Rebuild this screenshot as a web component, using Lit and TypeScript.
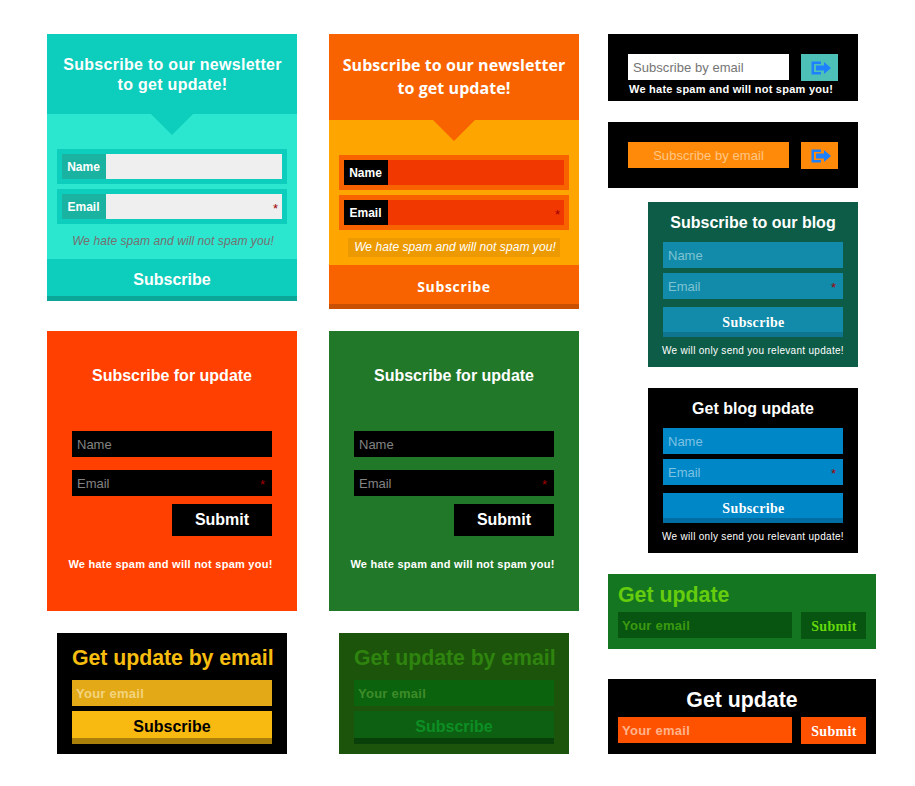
import { LitElement, html, css, svg } from "lit";
import { customElement } from "lit/decorators.js";

const exportIcon = html`<svg class="icon" viewBox="0 0 20 14" width="20" height="14">
  ${svg`<path d="M10 0.5H0.5V13.5H10V11H3V3H10Z" fill="#1e80fb"/><path d="M5 4.5H13V1L20 7L13 13V9.5H5Z" fill="#1e80fb"/>`}
</svg>`;

@customElement("app-root")
export class AppRoot extends LitElement {
  static styles = css`
    :host {
      display: block;
      box-sizing: border-box;
      height: 786px;
      padding: 34px 0 0 47px;
      background: #fff;
      font-family: "Liberation Sans", Arial, sans-serif;
      color: #fff;
    }
    * { box-sizing: border-box; }
    .page { display: flex; align-items: flex-start; }
    .col { display: flex; flex-direction: column; width: 250px; flex: none; }
    .col.mid { margin-left: 32px; }
    .col.side { margin-left: 29px; width: 268px; }
    .card { display: flex; flex-direction: column; white-space: nowrap; }
    h2, p { margin: 0; }
    h2 { font-size: 16px; font-weight: bold; line-height: 20px; text-align: center; }

    .news { height: 267px; background: #2be7cf; }
    .news .top { height: 80px; padding: 21px 0 0 1px; background: #0dcdbc; position: relative; letter-spacing: 0.29px; }
    .news .top::after {
      content: ""; position: absolute; top: 100%; left: 104px;
      border: 21px solid transparent; border-top-color: #0dcdbc; border-bottom: 0;
    }
    .news .rows { padding: 35px 10px 0; display: flex; flex-direction: column; gap: 5px; }
    .row { height: 35px; display: flex; border: 5px solid #0dcdbc; background: #efefef; }
    .row b { width: 44px; padding-right: 1px; background: #1ab3a1; font-size: 12px; line-height: 26px; text-align: center; }
    .row .star { margin: 7px 4px 0 auto; }
    .star { color: #a00000; font-size: 13px; line-height: 16px; height: 16px; }
    .italic { align-self: center; font-size: 12px; font-style: italic; line-height: 19px; height: 19px; color: #776f70; letter-spacing: 0.07px; margin: 8px 0; padding: 0 4px 0 6px; }
    .news .cta { margin-top: auto; height: 42px; background: #0dcdbc; border-bottom: 5px solid #0ca698; font-size: 16px; font-weight: bold; text-align: center; line-height: 41px; }

    .orange { height: 275px; background: #ffa500; }
    .orange .top { height: 86px; padding: 20px 0 0; background: #f86300; font-family: "Open Sans", sans-serif; letter-spacing: 0; }
    .orange .top h2 { line-height: 23px; font-size: 16px; letter-spacing: 0.06px; }
    .orange .top::after { border-top-color: #f86300; }
    .orange .row { border-color: #f86300; background: #f03800; }
    .orange .row b { background: #000; }
    .orange .italic { color: #fff; background: #ed9a00; }
    .orange .cta { height: 44px; background: #f86300; border-color: #c85000; font-family: "Open Sans", sans-serif; font-size: 14px; letter-spacing: 0.65px; line-height: 43px; }

    .plain { height: 280px; margin-top: 30px; padding: 35px 25px 0; background: #ff4000; }
    .mid .plain { margin-top: 22px; background: #207828; }
    .field { height: 26px; padding: 0 5px; font-size: 13px; line-height: 27px; display: flex; justify-content: space-between; flex: none; }
    .plain .field { background: #000; color: #838383; }
    .plain .field.first { margin: 45px 0 13px; }
    .plain .star { margin: 7px 2px 0 0; }
    .plain .send { align-self: flex-end; width: 100px; height: 32px; margin-top: 8px; background: #000; font-size: 16px; font-weight: bold; line-height: 31px; text-align: center; }
    .note { font-size: 11px; font-weight: bold; line-height: 14px; letter-spacing: 0.25px; text-align: center; }
    .plain .note { margin: 21px -19px 0 -20px; transform: none; padding-right: 2px; }

    .get { width: 230px; height: 121px; margin: 22px 0 0 10px; padding: 11px 15px 0; background: #000; }
    .get h2, .inline h2 { font-size: 21.33px; line-height: 28px; }
    .get h2 { color: #f5bd0f; margin-bottom: 8px; letter-spacing: -0.06px; }
    .get .field { background: #e3a917; color: #f3d47f; }
    .bold { font-weight: bold; letter-spacing: 0.25px; padding-left: 4px; }
    .get .cta { height: 33px; margin-top: 5px; background: #f8b910; border-bottom: 6px solid #aa7f0a; color: #000; font-size: 16px; font-weight: bold; line-height: 31px; text-align: center; }
    .mid .get { background: #1b540a; }
    .mid .get h2 { color: #2f840f; }
    .mid .get .field { background: #0c630d; color: #3e8c29; }
    .mid .get .cta { background: #0d6012; border-color: #093f09; color: #0d8e24; }

    .mini { width: 250px; height: 67px; padding: 20px 20px 0; background: #000; }
    .mini.second { height: 66px; margin-top: 21px; }
    .line { display: flex; justify-content: space-between; height: 27px; }
    .mini .field { width: 161px; background: #fff; color: #757575; letter-spacing: 0.05px; }
    .mini .go { width: 37px; height: 27px; background: #4dc0b8; display: flex; align-items: center; justify-content: center; padding-left: 3px; }
    .mini.second .field { background: #ff8a0a; color: #ffc684; justify-content: center; }
    .mini.second .go { background: #ff8a0a; }
    .mini .note { margin: 1px 0 0 1px; text-align: left; }
    .icon { display: block; }

    .blog { width: 210px; height: 165px; margin: 14px 0 0 40px; padding: 11px 15px 0; background: #0c5c47; }
    .blog.dark { margin-top: 21px; background: #000; }
    .blog .field { margin-top: 5px; background: #118ba9; color: #7fc3d3; }
    .blog .field.first { margin-top: 9px; }
    .blog .star { margin: 7px 2px 0 0; }
    .blog .cta { height: 30px; margin-top: 8px; padding-left: 1px; background: #118ba9; border-bottom: 5px solid #0e7490; text-align: center; line-height: 32px; }
    .blog.dark .field { background: #0087c7; color: #7dc2e3; }
    .blog.dark .cta { background: #0087c7; border-color: #006ea3; }
    .small { font-family: "Liberation Serif", serif; font-weight: bold; font-size: 14px; letter-spacing: 0.35px; }
    .blog .tiny { font-size: 10px; line-height: 14px; margin: 7px -10px 0; text-align: center; letter-spacing: 0.3px; }

    .inline { width: 268px; height: 75px; margin-top: 21px; padding: 7px 10px 0; background: #147620; }
    .inline h2 { text-align: left; color: #66cc0e; margin-bottom: 3px; }
    .inline .field { width: 174px; background: #075510; color: #3b9a11; }
    .inline .send { width: 65px; height: 27px; padding-left: 1px; background: #075510; color: #66d80e; line-height: 30px; text-align: center; }
    .inline.dark { margin-top: 30px; background: #000; }
    .inline.dark h2 { color: #fff; text-align: center; }
    .inline.dark .field { background: #ff5200; color: #ffb28c; }
    .inline.dark .send { background: #ff5200; color: #fff; }
  `;

  newsletter(kind = "") {
    return html`<section class="card news ${kind}">
      <div class="top"><h2>Subscribe to our newsletter<br>to get update!</h2></div>
      <div class="rows">
        <div class="row"><b>Name</b></div>
        <div class="row"><b>Email</b><span class="star">*</span></div>
      </div>
      <p class="italic">We hate spam and will not spam you!</p>
      <div class="cta">Subscribe</div>
    </section>`;
  }

  plain() {
    return html`<section class="card plain">
      <h2>Subscribe for update</h2>
      <div class="field first">Name</div>
      <div class="field">Email<span class="star">*</span></div>
      <div class="send">Submit</div>
      <p class="note">We hate spam and will not spam you!</p>
    </section>`;
  }

  byEmail() {
    return html`<section class="card get">
      <h2>Get update by email</h2>
      <div class="field bold">Your email</div>
      <div class="cta">Subscribe</div>
    </section>`;
  }

  mini(kind: string, note: boolean) {
    return html`<section class="card mini ${kind}">
      <div class="line"><div class="field">Subscribe by email</div><div class="go">${exportIcon}</div></div>
      ${note ? html`<p class="note">We hate spam and will not spam you!</p>` : ""}
    </section>`;
  }

  blog(title: string, kind = "") {
    return html`<section class="card blog ${kind}">
      <h2>${title}</h2>
      <div class="field first">Name</div>
      <div class="field">Email<span class="star">*</span></div>
      <div class="cta small">Subscribe</div>
      <p class="tiny">We will only send you relevant update!</p>
    </section>`;
  }

  inline(kind = "") {
    return html`<section class="card inline ${kind}">
      <h2>Get update</h2>
      <div class="line"><div class="field bold">Your email</div><div class="send small">Submit</div></div>
    </section>`;
  }

  render() {
    return html`<main class="page">
      <div class="col">${this.newsletter()}${this.plain()}${this.byEmail()}</div>
      <div class="col mid">${this.newsletter("orange")}${this.plain()}${this.byEmail()}</div>
      <div class="col side">
        ${this.mini("first", true)}${this.mini("second", false)}
        ${this.blog("Subscribe to our blog")}${this.blog("Get blog update", "dark")}
        ${this.inline()}${this.inline("dark")}
      </div>
    </main>`;
  }
}
